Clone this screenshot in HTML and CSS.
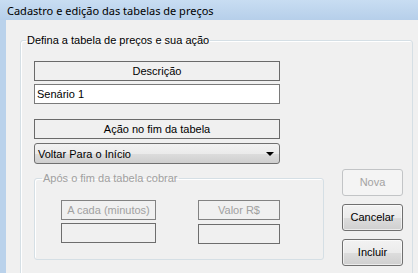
FILE: index.html
```html
<!DOCTYPE html>
<html lang="pt-BR">
<head>
<meta charset="utf-8">
<title>Cadastro e edição das tabelas de preços</title>
<link rel="stylesheet" href="styles.css">
</head>
<body>
<div class="window">
  <div class="titlebar">Cadastro e edição das tabelas de preços</div>
  <div class="frame">
    <div class="frame-edge"></div>
    <div class="client">
      <fieldset class="group outer">
        <legend class="legend">Defina a tabela de preços e sua ação</legend>
        <div class="group-body">
          <div class="main-row">
            <div class="left-col">
              <div class="cap-label">Descrição</div>
              <div class="textbox">Senário 1</div>
              <div class="cap-label acao">Ação no fim da tabela</div>
              <div class="combo">
                <span class="combo-text">Voltar Para o Início</span>
                <span class="combo-arrow"></span>
              </div>
              <fieldset class="group inner">
                <legend class="legend disabled-text">Após o fim da tabela cobrar</legend>
                <div class="inner-body">
                  <div class="field minutes">
                    <div class="cap-label disabled">A cada (minutos)</div>
                    <div class="textbox disabled"></div>
                  </div>
                  <div class="field valor">
                    <div class="cap-label disabled">Valor R$</div>
                    <div class="textbox disabled low"></div>
                  </div>
                </div>
              </fieldset>
            </div>
            <div class="buttons">
              <div class="btn btn-disabled">Nova</div>
              <div class="btn">Cancelar</div>
              <div class="btn">Incluir</div>
            </div>
          </div>
          <div class="list-label">Tabelas cadastradas</div>
        </div>
      </fieldset>
    </div>
  </div>
</div>
</body>
</html>
```
FILE: styles.css
```css
* { box-sizing: border-box; }
html, body { margin: 0; padding: 0; }
body {
  width: 418px;
  height: 273px;
  overflow: hidden;
  background: #f0f0f0;
  font-family: "Liberation Sans", Arial, sans-serif;
  font-size: 11px;
  color: #000;
}
.window {
  display: flex;
  flex-direction: column;
  height: 273px;
}
.titlebar {
  flex: none;
  height: 20px;
  padding-left: 7px;
  display: flex;
  align-items: center;
  font-family: "Noto Sans", "Open Sans", sans-serif;
  font-size: 11px;
  color: #000;
  white-space: nowrap;
  background: linear-gradient(#c8ddf2, #b6cfea);
}
.frame {
  flex: 1;
  display: flex;
  min-height: 0;
}
.frame-edge {
  flex: none;
  width: 6px;
  background: #bad2eb;
}
.client {
  flex: 1;
  background: #f0f0f0;
  padding: 14px 5px 0 14px;
  overflow: hidden;
}
.group {
  margin: 0;
  padding: 0;
  border: 1px solid #d5dfe5;
  border-radius: 3px;
  box-shadow: inset 1px 1px 0 #ffffff;
  min-width: 0;
}
.legend {
  margin-left: 5px;
  padding: 0 1px;
  line-height: 13px;
  white-space: nowrap;
}
.group.outer {
  height: 260px;
}
.group-body {
  padding: 14px 0 0 0;
}
.main-row {
  display: flex;
}
.left-col {
  margin-left: 13px;
  width: 290px;
  display: flex;
  flex-direction: column;
}
.cap-label {
  width: 246px;
  height: 20px;
  border: 1px solid #6a6a6a;
  display: flex;
  align-items: center;
  justify-content: center;
  line-height: 13px;
}
.textbox {
  width: 246px;
  height: 20px;
  margin-top: 3px;
  border: 1px solid #7a7a7a;
  background: #ffffff;
  padding-left: 2px;
  display: flex;
  align-items: center;
  line-height: 13px;
}
.cap-label.acao {
  margin-top: 15px;
}
.combo {
  margin-top: 4px;
  width: 246px;
  height: 21px;
  border: 1px solid #707070;
  border-radius: 3px;
  background: linear-gradient(#f2f2f2 0%, #ebebeb 50%, #dddddd 51%, #cfcfcf 100%);
  display: flex;
  align-items: center;
  justify-content: space-between;
  padding: 0 5px 0 3px;
}
.combo-arrow {
  width: 0;
  height: 0;
  border-left: 4px solid transparent;
  border-right: 4px solid transparent;
  border-top: 4px solid #000;
  margin-top: 1px;
}
.group.inner {
  margin-top: 8px;
  width: 290px;
}
.group.inner .legend {
  margin-left: 7px;
}
.disabled-text { color: #a0a0a0; }
.inner-body {
  display: flex;
  gap: 42px;
  padding: 15px 0 15px 26px;
}
.field {
  display: flex;
  flex-direction: column;
}
.minutes .cap-label, .minutes .textbox { width: 95px; }
.valor .cap-label, .valor .textbox { width: 82px; }
.cap-label.disabled {
  color: #a0a0a0;
  border-color: #828282;
}
.textbox.disabled {
  background: #f0f0f0;
  border-color: #6d6d6d;
}
.textbox.low {
  margin-top: 4px;
}
.buttons {
  margin-left: 18px;
  margin-top: 108px;
  display: flex;
  flex-direction: column;
  gap: 8px;
}
.btn {
  width: 61px;
  height: 27px;
  border: 1px solid #707070;
  border-radius: 3px;
  background: linear-gradient(#f2f2f2 0%, #ebebeb 50%, #dddddd 51%, #cfcfcf 100%);
  box-shadow: inset 0 0 0 1px rgba(255,255,255,0.6);
  display: flex;
  align-items: center;
  justify-content: center;
  line-height: 13px;
}
.btn-disabled {
  background: #f4f4f4;
  border-color: #c2c4c6;
  color: #a3a3a3;
  box-shadow: none;
}
.list-label {
  margin: 6px 0 0 10px;
  line-height: 13px;
  white-space: nowrap;
}
```
